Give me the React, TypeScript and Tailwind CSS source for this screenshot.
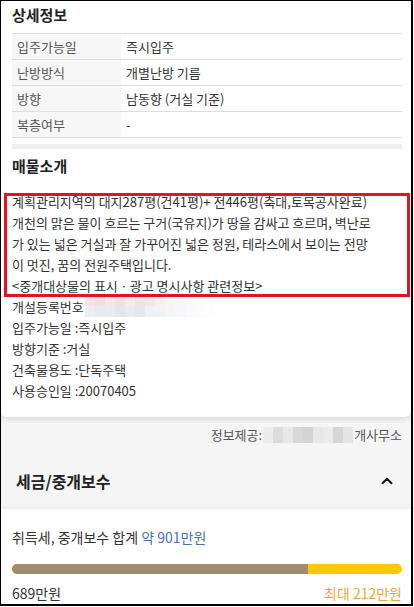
import { ChevronUp } from "lucide-react";

const font = { fontFamily: '"Noto Sans CJK KR", "Noto Sans", sans-serif' };

const rows = [
  { label: "입주가능일", value: "즉시입주" },
  { label: "난방방식", value: "개별난방 기름" },
  { label: "방향", value: "남동향 (거실 기준)" },
  { label: "복층여부", value: "-" },
];

const descLines = [
  "계획관리지역의 대지287평(건41평)+ 전446평(축대,토목공사완료)",
  "개천의 맑은 물이 흐르는 구거(국유지)가 땅을 감싸고 흐르며, 벽난로",
  "가 있는 넓은 거실과 잘 가꾸어진 넓은 정원, 테라스에서 보이는 전망",
  "이 멋진, 꿈의 전원주택입니다.",
  "<중개대상물의 표시ㆍ광고 명시사항 관련정보>",
];

const infoLines = [
  "입주가능일 :즉시입주",
  "방향기준 :거실",
  "건축물용도 :단독주택",
  "사용승인일 :20070405",
];

// pixelated blur stand-ins for masked text
const blurTop = ["#f6e4e8", "#f3dde2", "#f5e6ea", "#f1dfe3", "#f7e9ec", "#f2e2e6", "#f6e6e9", "#f8eef0", "#fbf4f5", "#fbf6f7", "#fcf8f9", "#fdfbfb", "#fefcfc", "#ffffff", "#ffffff", "#ffffff"];
const blurBottom = ["#eceef2", "#e6e9ee", "#e9ebef", "#e3e6eb", "#e8eaee", "#e5e7ec", "#eef0f3", "#f1f2f5", "#f4f5f7", "#f7f7f9", "#f9fafb", "#fbfbfc", "#fdfdfd", "#ffffff", "#ffffff", "#ffffff"];
const blurGray = ["#ececec", "#dcdcdc", "#e8e8e8", "#d8d8d8", "#d4d4d4", "#e6e6e6", "#ebebeb", "#d6d6d6", "#e4e4e4"];

export default function App() {
  return (
    <div className="w-[414px] h-[607px] bg-white overflow-hidden" style={font}>
      <div className="w-[413px] h-[606px] border-l border-t border-r-2 border-b-2 border-black bg-[#f5f5f5] overflow-hidden flex flex-col">
        {/* 상세정보 / 매물소개 card */}
        <div className="bg-white rounded-b-[6px] shadow-[0_2px_6px_rgba(0,0,0,0.12)] px-[11px] pb-[16px]">
          <div className="h-[32px] pb-[4px] flex items-center text-[15px] font-bold text-[#222]">
            상세정보
          </div>

          <div className="border-t border-[#dddddd] w-[390px]">
            {rows.map((r) => (
              <div key={r.label} className="flex h-[26px] border-b border-[#dddddd] text-[13px]">
                <div className="w-[109px] bg-[#f7f7f7] pl-[5px] flex items-center text-[#555]">
                  {r.label}
                </div>
                <div className="flex-1 pl-[5px] flex items-center text-[#333]">{r.value}</div>
              </div>
            ))}
          </div>
          <div className="mt-[6px] h-[5px] w-[390px] bg-[#efefef]" />

          <div className="h-[34px] flex items-center text-[15px] font-bold text-[#222]">매물소개</div>

          <div className="relative mt-[8px] text-[13px] leading-[21px] text-[#333]">
            {descLines.map((l) => (
              <div key={l} className="whitespace-nowrap">{l}</div>
            ))}
            <div className="flex items-center">
              <span>개설등록번호</span>
              <span className="ml-[1px] flex flex-col">
                <span className="flex">
                  {blurTop.map((c, i) => (
                    <span key={i} className="w-[10px] h-[9px]" style={{ background: c }} />
                  ))}
                </span>
                <span className="flex">
                  {blurBottom.map((c, i) => (
                    <span key={i} className="w-[10px] h-[11px]" style={{ background: c }} />
                  ))}
                </span>
              </span>
            </div>
            {infoLines.map((l) => (
              <div key={l}>{l}</div>
            ))}

            {/* red highlight box */}
            <div className="absolute left-[-8px] top-[2px] w-[406px] h-[104px] border-[3px] border-[#e4141b] pointer-events-none" />
          </div>
        </div>

        {/* 정보제공 */}
        <div className="h-[36px] shrink-0 flex items-center justify-end pr-[9px] text-[13px] text-[#555]">
          <span>정보제공:</span>
          <span className="flex mx-[1px]">
            {blurGray.map((c, i) => (
              <span key={i} className="w-[10px] h-[16px]" style={{ background: c }} />
            ))}
          </span>
          <span>개사무소</span>
        </div>

        {/* 세금/중개보수 header */}
        <div className="h-[56px] shrink-0 flex items-center justify-between pl-[15px] pr-[15px]">
          <span className="text-[16px] font-bold text-[#222]">세금/중개보수</span>
          <ChevronUp size={18} strokeWidth={2.6} className="text-[#111]" />
        </div>

        {/* 세금 card */}
        <div className="flex-1 bg-white shadow-[0_-1px_4px_rgba(0,0,0,0.06)] px-[11px] pt-[17px]">
          <div className="h-[22px] flex items-center text-[14px] text-[#333]">
            취득세, 중개보수 합계&nbsp;<span className="text-[#4a6fc4]">약 901만원</span>
          </div>
          <div className="mt-[16px] h-[10px] w-[390px] rounded-full overflow-hidden flex bg-[#ffc800]">
            <div className="h-full bg-[#9e8c73]" style={{ width: "76%" }} />
          </div>
          <div className="mt-[8px] h-[22px] w-[390px] flex items-center justify-between text-[14px]">
            <span className="text-[#333]">689만원</span>
            <span className="text-[#f0a53c]">최대 212만원</span>
          </div>
        </div>
      </div>
    </div>
  );
}
